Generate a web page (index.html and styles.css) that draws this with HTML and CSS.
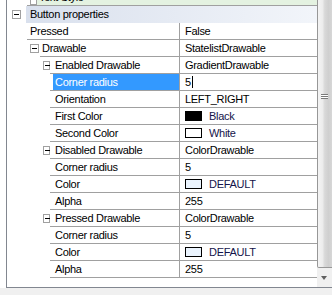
FILE: index.html
```html
<!DOCTYPE html>
<html lang="en">
<head>
    <meta charset="UTF-8">
    <title>Button properties</title>
    <link rel="stylesheet" href="styles.css">
</head>
<body>
    <div class="panel">
        <!-- property rows (scrolled, first row partly hidden) -->
        <div class="rows">
            <div class="row l1 top">
                <div class="gut"></div>
                <div class="cell">
                    <span class="box"></span><span class="lbl green">Text Style</span>
                </div>
            </div>

            <div class="row cat">
                <div class="gut"><span class="exp"></span></div>
                <div class="band">Button properties</div>
            </div>

            <div class="row l1">
                <div class="gut"></div>
                <div class="cell">
                    <div class="name"><span class="lbl">Pressed</span></div>
                    <div class="val">False</div>
                </div>
            </div>
            <div class="row l1x">
                <div class="gut"><span class="exp"></span></div>
                <div class="cell">
                    <div class="name"><span class="lbl">Drawable</span></div>
                    <div class="val">StatelistDrawable</div>
                </div>
            </div>

            <div class="row l2">
                <div class="gut"><span class="exp"></span></div>
                <div class="cell">
                    <div class="name"><span class="lbl">Enabled Drawable</span></div>
                    <div class="val">GradientDrawable</div>
                </div>
            </div>
            <div class="row l2">
                <div class="gut"></div>
                <div class="cell">
                    <div class="name"><span class="lbl sel">Corner radius</span></div>
                    <div class="val">5<span class="caret"></span></div>
                </div>
            </div>
            <div class="row l2">
                <div class="gut"></div>
                <div class="cell">
                    <div class="name"><span class="lbl">Orientation</span></div>
                    <div class="val">LEFT_RIGHT</div>
                </div>
            </div>
            <div class="row l2">
                <div class="gut"></div>
                <div class="cell">
                    <div class="name"><span class="lbl">First Color</span></div>
                    <div class="val"><span class="swatch black"></span><span class="cname">Black</span></div>
                </div>
            </div>
            <div class="row l2">
                <div class="gut"></div>
                <div class="cell">
                    <div class="name"><span class="lbl">Second Color</span></div>
                    <div class="val"><span class="swatch white"></span><span class="cname">White</span></div>
                </div>
            </div>

            <div class="row l2">
                <div class="gut"><span class="exp"></span></div>
                <div class="cell">
                    <div class="name"><span class="lbl">Disabled Drawable</span></div>
                    <div class="val">ColorDrawable</div>
                </div>
            </div>
            <div class="row l2">
                <div class="gut"></div>
                <div class="cell">
                    <div class="name"><span class="lbl">Corner radius</span></div>
                    <div class="val">5</div>
                </div>
            </div>
            <div class="row l2">
                <div class="gut"></div>
                <div class="cell">
                    <div class="name"><span class="lbl">Color</span></div>
                    <div class="val"><span class="swatch def"></span><span class="cname">DEFAULT</span></div>
                </div>
            </div>
            <div class="row l2">
                <div class="gut"></div>
                <div class="cell">
                    <div class="name"><span class="lbl">Alpha</span></div>
                    <div class="val">255</div>
                </div>
            </div>

            <div class="row l2">
                <div class="gut"><span class="exp"></span></div>
                <div class="cell">
                    <div class="name"><span class="lbl">Pressed Drawable</span></div>
                    <div class="val">ColorDrawable</div>
                </div>
            </div>
            <div class="row l2">
                <div class="gut"></div>
                <div class="cell">
                    <div class="name"><span class="lbl">Corner radius</span></div>
                    <div class="val">5</div>
                </div>
            </div>
            <div class="row l2">
                <div class="gut"></div>
                <div class="cell">
                    <div class="name"><span class="lbl">Color</span></div>
                    <div class="val"><span class="swatch def"></span><span class="cname">DEFAULT</span></div>
                </div>
            </div>
            <div class="row l2">
                <div class="gut"></div>
                <div class="cell">
                    <div class="name"><span class="lbl">Alpha</span></div>
                    <div class="val">255</div>
                </div>
            </div>
        </div>

        <!-- vertical scrollbar -->
        <div class="scrollbar">
            <div class="thumb"><span class="grip"></span></div>
            <div class="arrow-down"><span class="tri"></span></div>
        </div>
    </div>
    <div class="footer"></div>
</body>
</html>
```

FILE: styles.css
```css
body {
    margin: 0;
    width: 332px;
    height: 295px;
    overflow: hidden;
    background-color: #f0f0f0;
    font-family: "Liberation Sans", Arial, sans-serif;
    font-size: 11px;
    letter-spacing: -0.3px;
    color: #000;
}

.panel {
    display: flex;
    width: 330px;
    height: 287px;
    margin-left: 6px;
    background-color: #fff;
    border-left: 1px solid #828790;
    border-bottom: 1px solid #828790;
    box-shadow: -6px 0 0 #fff; /* white strip left of the border */
    overflow: hidden;
}

.rows {
    width: 310px;
    flex: none;
}

.row {
    display: flex;
    height: 17px;
}

.row.top {
    margin-top: -11px;
}

.gut {
    flex: none;
    display: flex;
    align-items: center;
    box-sizing: border-box;
}

.cell {
    flex: 1;
    display: flex;
    border-bottom: 1px solid #a0a0a0;
    line-height: 16px;
    min-width: 0;
}

.name {
    flex: 1;
    display: flex;
}

.lbl {
    flex: 1;
    padding-left: 2px;
    white-space: nowrap;
}

.lbl.sel {
    background-color: #3399ff;
    color: #fff;
}

.val {
    width: 132px;
    flex: none;
    padding-left: 5px;
    border-left: 1px solid #a0a0a0;
    display: flex;
    align-items: center;
    white-space: nowrap;
}

.green {
    background-color: #e4f2e1;
}

/* indents per level */
.cat .gut { width: 19px; padding-left: 5px; }
.l1 .gut { width: 20px; }
.l1 .name { padding-left: 1px; }
.l1x .gut { width: 33px; padding-left: 23px; }
.l2 .gut { width: 43px; padding-left: 36px; }
.l2 .name { padding-left: 3px; }

.top .cell { padding-left: 3px; }

.box {
    width: 7px;
    height: 16px;
    border: 1px solid #a0a0a0;
    border-top: none;
    box-sizing: border-box;
    background: #fff;
}

/* expander box with minus sign */
.exp {
    position: relative;
    width: 9px;
    height: 9px;
    box-sizing: border-box;
    border: 1px solid #a0a0a0;
    background: #fff;
}

.exp::after {
    content: "";
    position: absolute;
    left: 1px;
    top: 3px;
    width: 5px;
    height: 1px;
    background: #000;
}

.band {
    flex: 1;
    padding-left: 4px;
    line-height: 17px;
    background: linear-gradient(to right, #d9e0ed, #f2f5fa);
}

.caret {
    width: 1px;
    height: 12px;
    margin-left: 1px;
    background: #000;
}

.swatch {
    width: 17px;
    height: 10px;
    box-sizing: border-box;
    border: 1px solid #000;
    margin-right: 7px;
}

.swatch.black { background: #000; }
.swatch.white { background: #fff; }
.swatch.def { background: #eaf3fd; }

.cname {
    color: #14144a;
}

.scrollbar {
    width: 17px;
    flex: none;
    display: flex;
    flex-direction: column;
    background: #f0f0f0;
}

.thumb {
    height: 268px;
    box-sizing: border-box;
    border: 1px solid #979797;
    border-top: none;
    border-radius: 0 0 2px 2px;
    background: linear-gradient(to right, #f4f4f4 0%, #ececec 30%, #d8d8d8 45%, #cfcfcf 70%, #d9d9d9 100%);
    display: flex;
    justify-content: center;
    padding-top: 94px;
    padding-right: 3px;
}

.grip {
    width: 7px;
    height: 5px;
    border-top: 1px solid #7a7a7a;
    border-bottom: 1px solid #7a7a7a;
    box-sizing: border-box;
    background: linear-gradient(#fff 0, #fff 1px, #7a7a7a 1px, #7a7a7a 2px, #fff 2px);
}

.arrow-down {
    flex: 1;
    display: flex;
    justify-content: center;
    padding-right: 3px;
    padding-top: 8px;
}

.tri {
    width: 0;
    height: 0;
    border-left: 3px solid transparent;
    border-right: 3px solid transparent;
    border-top: 4px solid #606060;
}

.footer {
    height: 7px;
}
```
